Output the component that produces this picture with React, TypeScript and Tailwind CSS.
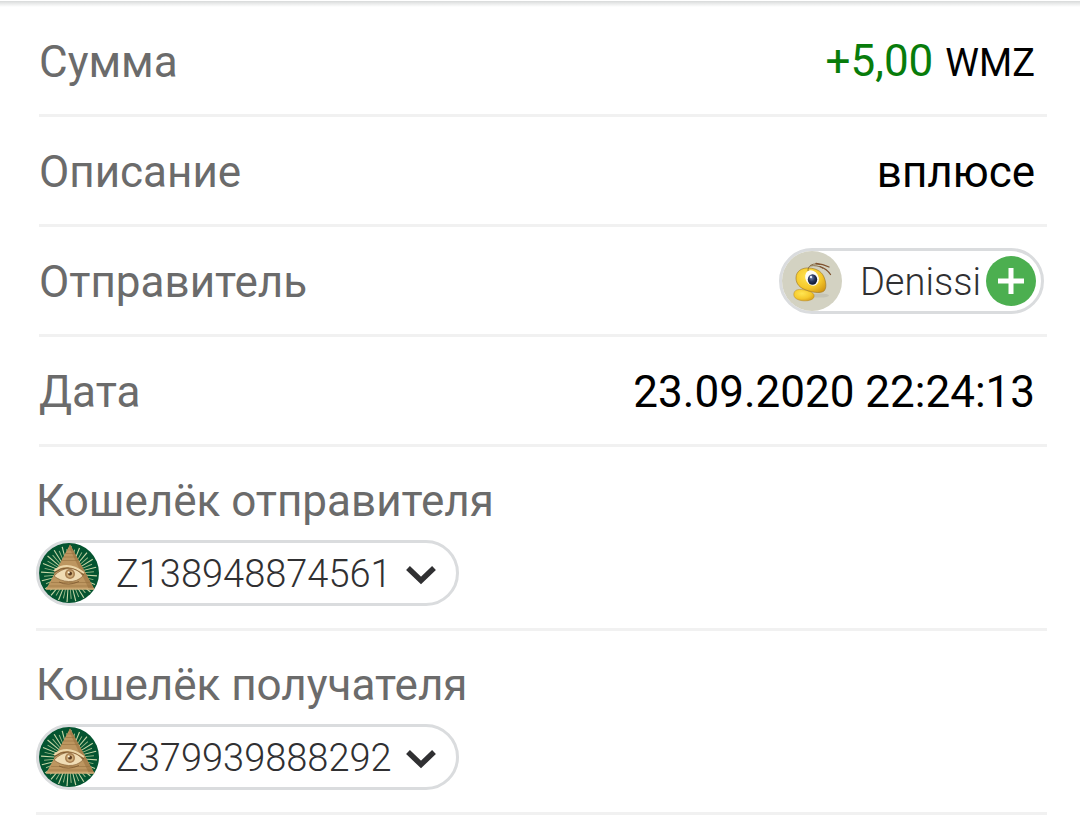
import type { ReactNode } from "react";

const RAYS = Array.from({ length: 40 }, (_, i) => i * 9);

/* Green seal with a pyramid and an eye */
function WalletEmblem() {
  return (
    <svg className="size-[60px] shrink-0 rounded-full" viewBox="0 0 60 60" aria-hidden="true">
      <rect width="60" height="60" fill="#045430" />
      {RAYS.map((angle, i) => (
        <path
          key={angle}
          d={i % 2 ? "M29.8 31L29.5 6L30.5 6L30.2 31Z" : "M29.7 31L29.4 3L30.6 3L30.3 31Z"}
          fill={i % 2 ? "#9dbb8a" : "#c9d8a8"}
          transform={`rotate(${angle + 4} 30 31)`}
        />
      ))}
      <path d="M31 1.5L55.5 46.5H7Z" fill="#bd9660" />
      <path d="M31 1.5L55.5 46.5H50L30 4Z" fill="#a9814d" />
      <path
        d="M28.5 7h5M26.5 10.5h9M24.5 14h13M22.5 17.5h17M12 39.5h39M10 43h43"
        stroke="#98733f"
        strokeWidth="0.6"
      />
      <path d="M7 46h48.5" stroke="#d9ba85" strokeWidth="1" />
      <path d="M15 28Q28 17 45 30" fill="none" stroke="#ecd6a8" strokeWidth="2" />
      <path d="M15 30Q28 19 45 32" fill="none" stroke="#7c5830" strokeWidth="1" />
      <path
        d="M15 33Q22 25.500 30 25.500Q39 25.500 44 33Q38 39 29.500 38.500Q21 38 15 33Z"
        fill="#f0dcb4"
        stroke="#8a643a"
        strokeWidth="0.7"
      />
      <circle cx="31" cy="31" r="5" fill="#a87f50" />
      <circle cx="31" cy="31" r="3.400" fill="#d0ad78" />
      <circle cx="31" cy="30.500" r="2" fill="#5a3a20" />
      <circle cx="29.800" cy="29.500" r="1" fill="#fff6dc" />
      <path d="M20 39Q29 43.500 40 38.500" fill="none" stroke="#7c5830" strokeWidth="0.800" />
    </svg>
  );
}

/* Yellow ant on a beige disc */
function AntAvatar() {
  return (
    <svg className="size-[60px] shrink-0 rounded-full" viewBox="0 0 60 60" aria-hidden="true">
      <defs>
        <radialGradient id="ant-body" cx="0.4" cy="0.35" r="0.75">
          <stop offset="0" stopColor="#ffe552" />
          <stop offset="0.6" stopColor="#f5c92c" />
          <stop offset="1" stopColor="#d59a15" />
        </radialGradient>
        <radialGradient id="ant-pupil" cx="0.4" cy="0.35" r="0.7">
          <stop offset="0" stopColor="#6f83ad" />
          <stop offset="0.5" stopColor="#26345c" />
          <stop offset="1" stopColor="#0a1026" />
        </radialGradient>
      </defs>
      <rect width="60" height="60" fill="#d3d2c2" />
      <ellipse cx="38" cy="44.500" rx="9" ry="2" fill="#c4c3b5" />
      <path
        d="M12 42C13 38 18 38 23 39C28 40 33 42 32 46C31 49.500 24 50.500 19 49.500C14 48.500 11 46 12 42Z"
        fill="url(#ant-body)"
        stroke="#b98a20"
        strokeWidth="0.5"
      />
      <path
        d="M14 27C14 20 20 16.500 27 17C34 17.500 39 20 41.500 25C44 30 45 37 42 40C38 43 29 41 24 39C18 37 14 33 14 27Z"
        fill="url(#ant-body)"
        stroke="#9a7420"
        strokeWidth="0.6"
      />
      <ellipse cx="30" cy="27" rx="6.500" ry="8" transform="rotate(-30 30 27)" fill="#fdfdf6" />
      <ellipse cx="30.500" cy="28.500" rx="4.700" ry="5.200" fill="url(#ant-pupil)" />
      <circle cx="29" cy="26" r="1.200" fill="#e4ebfa" />
      <path
        d="M26 20C26 16 28 13.500 33 13Q36 13 38 13.500M28 15C32 14 38 15 41 17.500"
        fill="none"
        stroke="#7a5a30"
        strokeWidth="0.8"
      />
      <path d="M34 12.500Q41 13 47 16M38 15.500Q45 18 48.500 23.500" fill="none" stroke="#7f5230" strokeWidth="1.300" strokeLinecap="round" />
    </svg>
  );
}

function Row({ label, children }: { label: string; children: ReactNode }) {
  return (
    <div className="ml-[3px] flex h-[110px] items-center justify-between border-b-[3px] border-[#f1f1f1]">
      <dt className="pt-0.5 text-[#6b6b6b]">{label}</dt>
      <dd className="flex items-center text-black">{children}</dd>
    </div>
  );
}

function WalletField({ id, label, number }: { id: string; label: string; number: string }) {
  return (
    <div className="flex h-[184px] flex-col items-start border-b-[3px] border-[#f1f1f1] pt-7">
      <label htmlFor={id} className="leading-[52px] text-[#6b6b6b]">
        {label}
      </label>
      <div className="relative mt-[13px] flex h-[66px] items-center rounded-full border-[3px] border-[#dadcde]">
        <WalletEmblem />
        <select
          id={id}
          className="h-[60px] w-[357px] cursor-pointer appearance-none rounded-r-full bg-transparent pt-0.5 pl-[17px] text-[38px] font-light text-[#303032]"
        >
          <option>{number}</option>
        </select>
        <svg
          className="pointer-events-none absolute right-5 top-[22px] h-5 w-[30px]"
          viewBox="0 0 30 20"
          fill="none"
          stroke="#303032"
          strokeWidth="5.5"
          aria-hidden="true"
        >
          <path d="M2 3L15 15.5L28 3" />
        </svg>
      </div>
    </div>
  );
}

export default function App() {
  return (
    <main className="min-h-screen bg-white pb-4 font-[Roboto,sans-serif] text-[44px] leading-[52px]">
      <div className="h-[7px] border-t border-white bg-linear-to-b from-[#d8dada] via-[#eceded] to-white bg-clip-padding" />
      <div className="ml-9 mr-[33px]">
        <dl>
          <Row label="Сумма">
            <span className="flex items-baseline gap-3 pt-0.5 pr-3">
              <span className="text-[#087c0b]">+5,00</span>
              <span className="text-[38px]">WMZ</span>
            </span>
          </Row>
          <Row label="Описание">
            <span className="pt-0.5 pr-3">вплюсе</span>
          </Row>
          <Row label="Отправитель">
            <span className="mr-[3px] flex h-[66px] items-center rounded-full border-[3px] border-[#dadcde] pr-[5px]">
              <AntAvatar />
              <a href="#denissi" className="pt-0.5 pl-[18px] pr-[5px] text-[38px] font-light text-[#303032]">
                Denissi
              </a>
              <button
                type="button"
                aria-label="Добавить"
                className="flex size-[50px] items-center justify-center rounded-full bg-[#4caf50]"
              >
                <svg className="size-[26px]" viewBox="0 0 26 26" stroke="#fff" strokeWidth="5" aria-hidden="true">
                  <path d="M13 0V26M0 13H26" />
                </svg>
              </button>
            </span>
          </Row>
          <Row label="Дата">
            <span className="pt-0.5 pr-3">23.09.2020 22:24:13</span>
          </Row>
        </dl>
        <WalletField id="sender-wallet" label="Кошелёк отправителя" number="Z138948874561" />
        <WalletField id="recipient-wallet" label="Кошелёк получателя" number="Z379939888292" />
      </div>
    </main>
  );
}
